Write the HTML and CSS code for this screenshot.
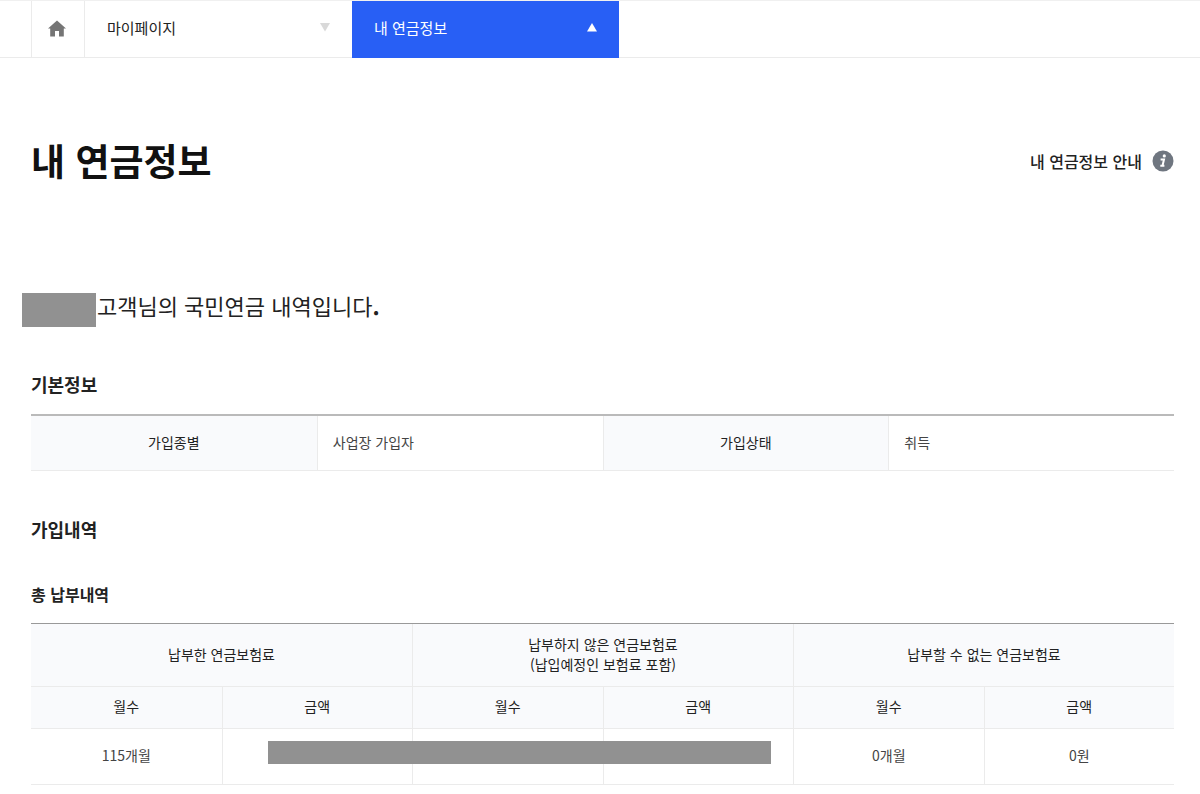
FILE: index.html
```html
<!DOCTYPE html>
<html lang="ko">
<head>
<meta charset="utf-8">
<meta name="viewport" content="width=device-width, initial-scale=1">
<title>내 연금정보</title>
<link rel="stylesheet" href="styles.css">
</head>
<body>
<nav class="location" aria-label="현재 위치">
  <a class="home" href="#" aria-label="홈">
    <svg width="18" height="17" viewBox="0 0 18 17" aria-hidden="true"><path d="M9 .5 0 8.500h2.200v8h4.800v-5.500h4v5.500h4.800v-8H18z"/></svg>
  </a>
  <button class="menu" type="button" aria-expanded="false">마이페이지
    <svg width="10" height="9" viewBox="0 0 10 9" aria-hidden="true"><path d="M0 0h10L5 8.500z"/></svg>
  </button>
  <button class="menu current" type="button" aria-expanded="true">내 연금정보
    <svg width="10" height="9" viewBox="0 0 10 9" aria-hidden="true"><path d="M0 8.500h10L5 0z"/></svg>
  </button>
</nav>
<main class="content">
  <header class="page-head">
    <h1>내 연금정보</h1>
    <a class="guide" href="#">내 연금정보 안내
      <svg width="22" height="22" viewBox="0 0 22 22" aria-hidden="true"><circle cx="11" cy="11" r="10.500" fill="#6f7680"/><circle cx="12.300" cy="5.900" r="1.600" fill="#fff"/><path d="M8.600 9.600h3.400l-1.500 6.200h1.900M8.300 15.800h2" fill="none" stroke="#fff" stroke-width="2"/></svg>
    </a>
  </header>
  <p class="customer"><span class="mask"></span>고객님의 국민연금 내역입니다<strong>.</strong></p>

  <section class="basic">
    <h2>기본정보</h2>
    <table class="info">
      <tbody>
        <tr><th scope="row">가입종별</th><td>사업장 가입자</td><th scope="row">가입상태</th><td>취득</td></tr>
      </tbody>
    </table>
  </section>

  <section>
    <h2>가입내역</h2>
    <h3>총 납부내역</h3>
    <div class="payments-wrap">
      <table class="payments">
        <thead>
          <tr class="groups"><th colspan="2" scope="colgroup">납부한 연금보험료</th><th colspan="2" scope="colgroup">납부하지 않은 연금보험료<br>(납입예정인 보험료 포함)</th><th colspan="2" scope="colgroup">납부할 수 없는 연금보험료</th></tr>
          <tr class="units"><th scope="col">월수</th><th scope="col">금액</th><th scope="col">월수</th><th scope="col">금액</th><th scope="col">월수</th><th scope="col">금액</th></tr>
        </thead>
        <tbody>
          <tr><td>115개월</td><td></td><td></td><td></td><td>0개월</td><td>0원</td></tr>
        </tbody>
      </table>
      <span class="row-mask"></span>
    </div>
  </section>
</main>
</body>
</html>
```
FILE: styles.css
```css
* { box-sizing: border-box; }
body {
  margin: 0;
  background: #fff;
  color: #222;
  font-family: "Noto Sans CJK KR", sans-serif;
  font-size: 14px;
  line-height: 20px;
}
h1, h2, h3, p { margin: 0; }
a { color: inherit; text-decoration: none; }
svg { flex: none; }

.location {
  display: flex;
  height: 58px;
  padding-left: 31px;
  border-top: 1px solid #f0f0f0;
  border-bottom: 1px solid #ebebeb;
}
.home {
  display: flex;
  align-items: center;
  justify-content: center;
  width: 54px;
  padding: 0 2px 2px 0;
  border: solid #ebebeb;
  border-width: 0 1px;
}
.home svg { fill: #757575; }
.menu {
  display: flex;
  align-items: center;
  justify-content: space-between;
  width: 267px;
  padding: 0 22px 3px;
  border: 0;
  background: none;
  color: #222;
  font: 400 15px/22px "Noto Sans CJK KR", sans-serif;
}
.menu svg { fill: #d9d9d9; }
.current {
  margin-bottom: -1px;
  padding-bottom: 4px;
  background: #285ff5;
  color: #fff;
}
.current svg { fill: #fff; }

.content { padding: 75px 26px 0 31px; }
.page-head {
  display: flex;
  align-items: center;
  justify-content: space-between;
}
h1 {
  padding-bottom: 2px;
  color: #111;
  font-size: 37px;
  font-weight: 700;
  line-height: 54px;
}
.guide {
  display: flex;
  align-items: center;
  gap: 10px;
  font-size: 16px;
  font-weight: 500;
}
.customer {
  display: flex;
  align-items: flex-start;
  margin: 104px 0 0 -9px;
  font-size: 22px;
  line-height: 24px;
}
.mask {
  width: 74px;
  height: 34px;
  margin-right: 1px;
  background: #919191;
}
.basic { margin: 44px 0 45px; }
h2 {
  font-size: 18px;
  font-weight: 700;
  line-height: 26px;
}
h3 {
  margin: 40px 0 17px;
  font-size: 16px;
  font-weight: 700;
  line-height: 24px;
}

table {
  width: 100%;
  border-collapse: separate;
  border-spacing: 0;
  table-layout: fixed;
}
th, td {
  padding: 0 0 3px;
  border-bottom: 1px solid #ebebeb;
  border-left: 1px solid #ebebeb;
  text-align: center;
}
tr > :first-child { border-left: 0; }
th {
  background: #f9fafc;
  color: #222;
  font-weight: 400;
}
td { color: #444; }
.info {
  margin-top: 17px;
  border-top: 2px solid #bababa;
}
.info th, .info td { height: 55px; }
.info td {
  padding-left: 15px;
  text-align: left;
}
.payments-wrap { position: relative; }
.payments { border-top: 1px solid #999; }
.groups th { height: 63px; }
.units th { height: 42px; }
.payments td { height: 56px; }
.row-mask {
  position: absolute;
  bottom: 21px;
  left: 20.7%;
  width: 44%;
  height: 23px;
  background: #919191;
}
```
